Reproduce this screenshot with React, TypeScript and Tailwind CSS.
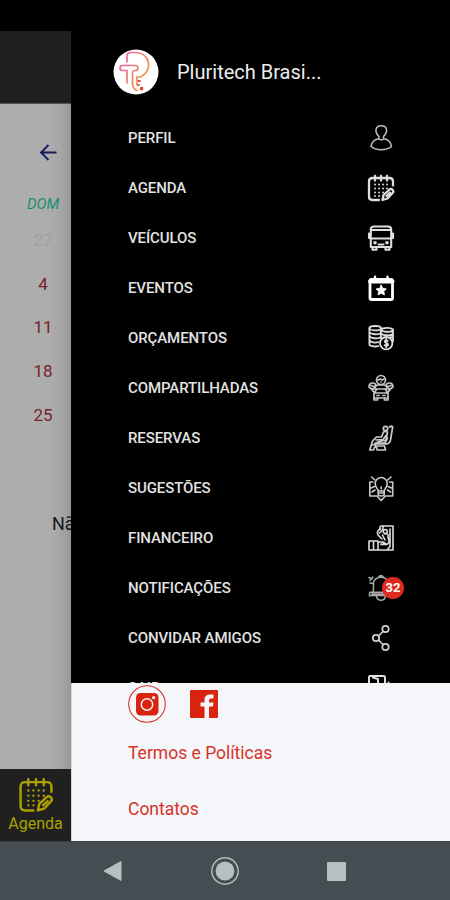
import type { ReactNode } from "react"

type MenuItem = { label: string; icon: ReactNode; badge?: string }

function Icon({ children, width = 1.3 }: { children: ReactNode; width?: number }) {
  return (
    <svg
      viewBox="0 0 28 28"
      className="h-7 w-7 text-[#dedede]"
      fill="none"
      stroke="currentColor"
      strokeWidth={width}
      strokeLinecap="round"
      strokeLinejoin="round"
    >
      {children}
    </svg>
  )
}

function CalendarPaths() {
  return (
    <>
      <path d="M12 26H5.500Q2 26 2 22.500V7.500Q2 4 5.500 4h17Q26 4 26 7.500V11.500" />
      <path d="M8 1.800v4.700M14 1.800v4.700M20 1.800v4.700" />
      <path
        d="M8 10.500h.1M12 10.500h.1M16 10.500h.1M20 10.500h.1M8 14.500h.1M12 14.500h.1M16 14.500h.1M20 14.500h.1M8 18.500h.1M12 18.500h.1M16 18.500h.1M8 22h.1M12 22h.1"
        strokeWidth="1.800"
      />
      <path d="M15.500 26l1-5 6-5.500q1.500-1.200 3 .3t.3 3L20.500 24.500zM19.500 22l3.500-3.300" />
    </>
  )
}

const items: MenuItem[] = [
  {
    label: "PERFIL",
    icon: (
      <Icon width={1.5}>
        <path
          d="M12 12.500C10 10.500 8.500 8.500 9 5.500 10 .6 18.500 .6 19.500 5.500 20 8.500 18.500 10.500 16.500 12.500v2.300c4.500.5 7.300 3.700 8 7.700-5 4.300-15.500 4.300-20.500 0 .7-4 3.500-7.200 8-7.700zM11.500 14.800q2.700 2 5.500 0"
          stroke="#bdbdbd"
        />
      </Icon>
    ),
  },
  { label: "AGENDA", icon: <Icon width={2.3}><CalendarPaths /></Icon> },
  {
    label: "VEÍCULOS",
    icon: (
      <Icon width={2.1}>
        <path d="M3.800 23V5.500q0-3 3.200-3h14q3.200 0 3.200 3V23zM4 6h20M4 14.500h20M2 9.500v4.500M26 9.500v4.500" />
        <path d="M5.500 23.500v2.300h4V23M18.500 23v2.800h4v-2.300M11.500 20.500h5" />
        <circle cx="8" cy="18.700" r="1.800" fill="currentColor" stroke="none" />
        <circle cx="20" cy="18.700" r="1.800" fill="currentColor" stroke="none" />
      </Icon>
    ),
  },
  {
    label: "EVENTOS",
    icon: (
      <Icon width={2.8}>
        <rect x="3" y="5.300" width="22.500" height="20.200" rx="1.500" stroke="#fff" />
        <path d="M3 7.500h22.500" strokeWidth="4" stroke="#fff" />
        <path d="M8 2.700v3M20.500 2.700v3" strokeWidth="2.400" stroke="#fff" />
        <path d="M14.200 11.200l1.600 3.200 3.500.5-2.500 2.500.6 3.500-3.200-1.700-3.200 1.700.6-3.500-2.500-2.500 3.500-.5z" fill="#fff" stroke="#fff" strokeWidth=".9" />
      </Icon>
    ),
  },
  {
    label: "ORÇAMENTOS",
    icon: (
      <Icon width={1.8}>
        <ellipse cx="8.200" cy="4.200" rx="5.800" ry="2.200" />
        <path d="M2.400 4.200v16c0 2 5 2.700 9 2M14 4.200v10M2.400 8.200c1 2.400 10 2.900 11.600.5M2.400 12.200c1 2.400 10 2.900 11.600.5M2.400 16.200c1 2.400 6 2.900 9 2" />
        <path d="M14 5.500c2-2 9.500-2.500 12 0V17M14 6c1.500 2 10 2.500 12 .5M14 9.500c1.500 2 10 2.500 12 .5M23 13.500l3-.5" />
        <circle cx="19.200" cy="19.200" r="6.200" />
        <path d="M20.800 16.800q-3-1-3 .7c0 2 3.500 1.300 3.300 3.300-.2 1.500-2.500 1.300-3.500.5M19.300 15v8.200" />
      </Icon>
    ),
  },
  {
    label: "COMPARTILHADAS",
    icon: (
      <Icon width={1.7}>
        <g stroke="#c4c4c4">
          <circle cx="14" cy="6" r="4.500" />
          <path d="M11 6l2-1 2 1 2-1M14 8h.1M11 11h6l3 1v3H8v-3zM10 15l-3 4h14l-3-4M7 19h14v5H7z" />
          <path d="M7 24v2h3.500v-2M17.500 24v2H21v-2M10 21.500h2M16 21.500h2M2 13q0-4 3.500-4T9 12l-4 4 3 3M26 13q0-4-3.500-4T19 12l4 4-3 3M2 13l4 3M26 13l-4 3M4 11.500l4 1.500M24 11.500L20 13" />
        </g>
      </Icon>
    ),
  },
  {
    label: "RESERVAS",
    icon: (
      <Icon width={1.7}>
        <g stroke="#cacaca">
          <circle cx="18.500" cy="4.500" r="2.200" />
          <path d="M22.500 3q2-1.500 3.200 0L23.500 16q-1 4-4.500 4H9l-2.500 6H2.800L5.500 17l4-4h5l2-5q2-1 4 0l-1.500 8-8.500 2M9 16l7-.5 3-4M8 19h10l2.500-5M10 22h7.500l1 4h-8.300l-1-4M5 21l4-1" />
        </g>
      </Icon>
    ),
  },
  {
    label: "SUGESTÕES",
    icon: (
      <Icon width={1.6}>
        <g stroke="#c9c9c9">
          <path d="M11.200 17c0-2.500-3-3-3-7.500a6 6 0 0 1 12 0c0 4.500-3 5-3 7.500zM11.200 17v4q3 2 6 0v-4M12 19h4.500M14.200 13v2" />
          <path d="M6 8H2.800v14H10l4.200 4.500 4.200-4.500h7.300V8H22.500M4.500 3L8 6M24 3l-3.500 3M4 14l3.500-1.500M24.500 14L21 12.500M5 18l3-2M23.500 18l-3-2" />
        </g>
      </Icon>
    ),
  },
  {
    label: "FINANCEIRO",
    icon: (
      <Icon width={1.6}>
        <path d="M13 5V3.500q0-1.500 1.500-1.500H26v24H2V17h9v9M6.500 17v9M11 18h5l3 2h-5M14 20.500h6l3-3.500v5.500l-3 3.500" />
        <path d="M13.500 5q-4.500 2-2.500 6l4 4M16 2.500v3L12.500 9M23 5v11M18 10q4-1 3 3l1 4M15.500 11l2.500 5" />
        <circle cx="18.300" cy="7.500" r="2" />
      </Icon>
    ),
  },
  {
    label: "NOTIFICAÇÕES",
    badge: "32",
    icon: (
      <Icon width={1.500}>
        <g stroke="#a9a9a9">
          <path d="M5 20q1.500-2 1.500-5V9q0-4.500 7.500-6 7.500 1.500 7.500 6v6q0 3 1.500 5zM3 18.300h22M3 21.500h22M9.500 22.500q1 3.800 4.500 3.800t4.500-3.800M11.500 3.500q2.500-4 5 0M2 3.500l3 1.500M6 3L3 6.500M3 9l3 .5M2.500 19v3" />
        </g>
      </Icon>
    ),
  },
  {
    label: "CONVIDAR AMIGOS",
    icon: (
      <Icon width={1.7}>
        <g stroke="#cfcfcf">
          <circle cx="9" cy="14" r="3.200" />
          <circle cx="18.500" cy="5" r="3.200" />
          <circle cx="18.500" cy="23" r="3.200" />
          <path d="M11.500 12l4.500-4.500M11.500 16l4.500 4.500" />
        </g>
      </Icon>
    ),
  },
  {
    label: "SAIR",
    icon: (
      <Icon width={2}>
        <path d="M2 26V3q0-1 1-1h13.500q1.500 0 1.500 2v22M6 3.500l5 1.500v19M21.500 8.500h.1" />
      </Icon>
    ),
  },
]

function Logo() {
  return (
    <svg viewBox="0 0 46 46" className="h-[46px] w-[46px]" fill="none">
      <defs>
        <linearGradient id="brand" x1="8" x2="36" y1="10" y2="25" gradientUnits="userSpaceOnUse">
          <stop stopColor="#ec5bb5" />
          <stop offset=".55" stopColor="#f4806c" />
          <stop offset="1" stopColor="#f5943e" />
        </linearGradient>
      </defs>
      <circle cx="23" cy="23" r="22.500" fill="#fff" />
      <g stroke="url(#brand)" strokeWidth="1.700" strokeLinecap="round">
        <path d="M14 13V7q0-3.500 4-3.500h4c15 0 18 17 7 23.500" />
        <path d="M14 34V21.500H9.500q-2.500 0-2.500-2.500t2.500-2.500H22q3 0 3 2.500t-2.500 2.500q-3 0-3 3V34q0 6 4.500 7.500" />
        <path d="M24 36v-8h4" />
      </g>
      <path d="M25 31h2.500v2H25zM24.500 35h2v2h-2zM27 38h3.200v3.200H27z" fill="#e74427" />
    </svg>
  )
}

function AgendaScreen() {
  return (
    <div className="flex w-[71px] shrink-0 flex-col overflow-hidden">
      <div className="h-[31px] bg-black" />
      <div className="h-[73px] border-b border-[#555] bg-[#202020]" />
      <div className="flex flex-1 flex-col bg-[linear-gradient(to_right,#adadad_0,#adadad_48px,#a5a5a5_62px,#979797_71px)] pt-[38px]">
        <svg viewBox="0 0 20 20" className="ml-[39px] h-5 w-5" fill="none" stroke="#15195d" strokeWidth="1.800">
          <path d="M17.500 10.500H2M9.500 3L2 10.500 9.500 18" />
        </svg>
        <div className="mt-8 pl-[27px] text-[15px] leading-5 text-[#188e71] italic">DOM</div>
        <div className="mt-[6px] flex w-[86px] flex-col text-center text-[17px] text-[#74222c]">
          <span className="h-[43.700px] leading-[40px] text-[#a0a0a0]">27</span>
          <span className="h-[43.700px] leading-[40px]">4</span>
          <span className="h-[43.700px] leading-[40px]">11</span>
          <span className="h-[43.700px] leading-[40px]">18</span>
          <span className="h-[43.700px] leading-[40px]">25</span>
        </div>
        <div className="mt-[74px] pl-[52px] text-[18px] leading-6 whitespace-nowrap text-[#171717]">Não</div>
      </div>
      <div className="flex h-[72px] flex-col items-center bg-[#202020] pt-2 text-[#aba100]">
        <svg
          viewBox="0 0 28 28"
          className="h-9 w-9"
          fill="none"
          stroke="currentColor"
          strokeWidth="1.900"
          strokeLinecap="round"
          strokeLinejoin="round"
        >
          <CalendarPaths />
        </svg>
        <span className="text-[16px] leading-[21px]">Agenda</span>
      </div>
    </div>
  )
}

function MenuRow({ label, icon, badge }: MenuItem) {
  return (
    <li className="relative flex h-[50px] shrink-0 items-center justify-between pr-[55px] pl-[57px]">
      <span className="text-[15px] font-medium tracking-[-0.100px] text-[#e2e2e2]">{label}</span>
      {icon}
      {badge && (
        <span className="absolute top-[14px] left-[311px] flex h-[22px] w-[22px] items-center justify-center rounded-full bg-[#df2b1d] text-[13px] font-bold text-white">
          {badge}
        </span>
      )}
    </li>
  )
}

function Drawer() {
  return (
    <aside className="flex flex-1 flex-col bg-black">
      <div className="flex h-[683px] flex-col overflow-hidden">
        <div className="flex h-[113px] shrink-0 items-center gap-[18px] pt-[31px] pl-[42px]">
          <Logo />
          <span className="text-[20px] text-[#ededed]">Pluritech Brasi...</span>
        </div>
        <ul className="flex flex-col">
          {items.map((item) => (
            <MenuRow key={item.label} {...item} />
          ))}
        </ul>
      </div>
      <div className="flex flex-1 flex-col border-l border-[#d5d6d8] bg-[#f4f6fa] pl-14 text-[17.500px] text-[#d83228]">
        <div className="flex items-center gap-6 pt-[2px]">
          <svg viewBox="0 0 38 38" className="h-[38px] w-[38px]" fill="none">
            <circle cx="19" cy="19" r="18.300" stroke="#d83228" strokeWidth="1.100" />
            <rect x="8" y="8" width="22.500" height="22.500" rx="4.500" fill="#d9230f" />
            <circle cx="19" cy="19.500" r="5.700" stroke="#f4f6fa" strokeWidth="1.500" />
            <circle cx="25.700" cy="12.700" r="1.600" fill="#f4f6fa" />
          </svg>
          <svg viewBox="0 0 28 28" className="h-7 w-7">
            <rect width="28" height="28" rx="1" fill="#d9230f" />
            <path d="M14.500 28V16.500H10.500V12.500h4V10q0-5.500 5.500-5.500h3.500v4H21q-2 0-2 2v2h4.500l-.5 4h-4V28z" fill="#f4f6fa" />
          </svg>
        </div>
        <a className="mt-[18px] leading-[24px]">Termos e Políticas</a>
        <a className="mt-8 leading-[24px]">Contatos</a>
      </div>
    </aside>
  )
}

export default function App() {
  return (
    <div className="flex h-[900px] w-[450px] flex-col overflow-hidden bg-black font-['Roboto',sans-serif]">
      <div className="flex h-[841px] shrink-0">
        <AgendaScreen />
        <Drawer />
      </div>
      <nav className="flex flex-1 items-center justify-between border-t border-[#353e42] bg-[#454d52] pr-[104px] pl-[102px]">
        <svg viewBox="0 0 20 22" className="h-[22px] w-5">
          <path d="M2 11L19 1.500v19z" fill="#b8bfc1" stroke="#b8bfc1" strokeLinejoin="round" />
        </svg>
        <svg viewBox="0 0 30 30" className="h-[30px] w-[30px]">
          <circle cx="15" cy="15" r="13.200" fill="none" stroke="#b8bfc1" strokeWidth="1.400" />
          <circle cx="15" cy="15" r="9.400" fill="#b8bfc1" />
        </svg>
        <div className="h-[19px] w-[19px] rounded-[1px] bg-[#b8bfc1]" />
      </nav>
    </div>
  )
}
